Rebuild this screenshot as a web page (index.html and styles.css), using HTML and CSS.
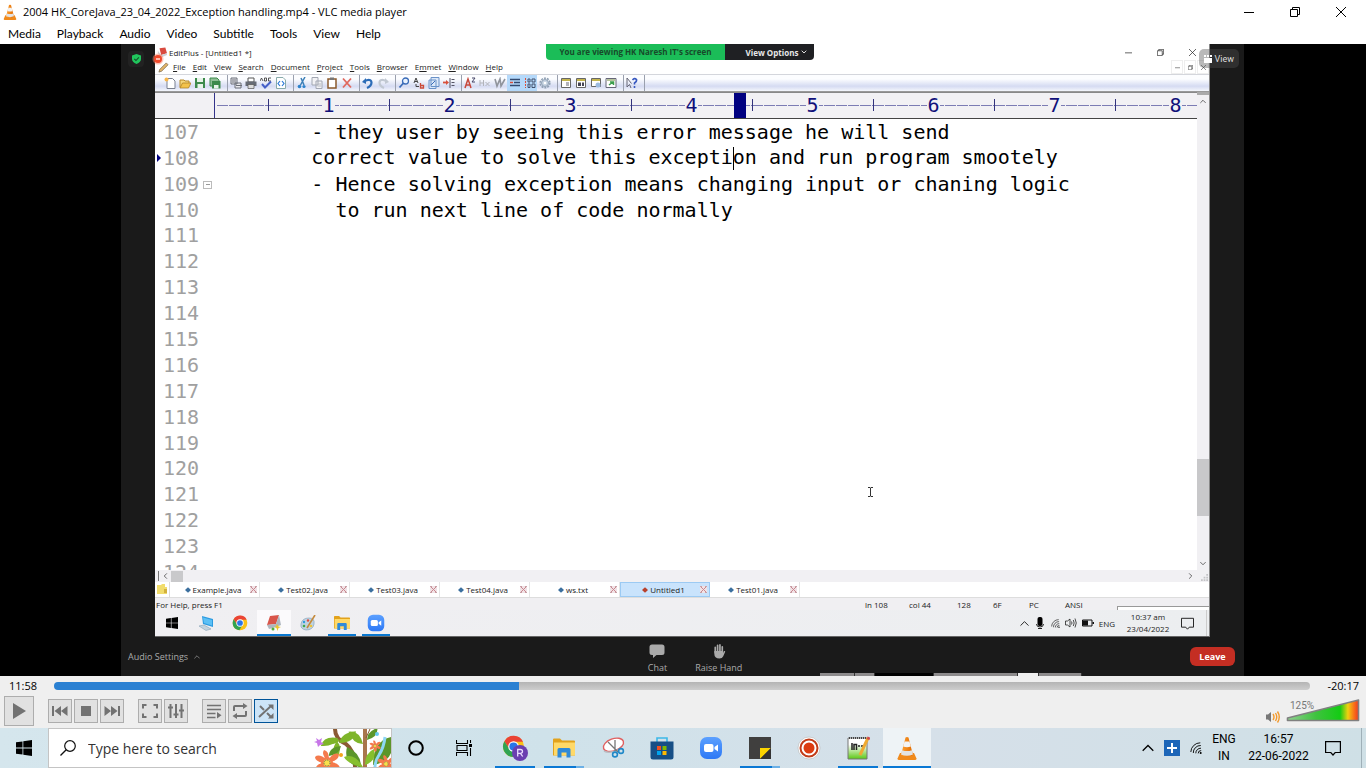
FILE: index.html
```html
<!DOCTYPE html>
<html lang="en">
<head>
<meta charset="utf-8">
<title>2004 HK_CoreJava_23_04_2022_Exception handling.mp4 - VLC media player</title>
<link rel="stylesheet" href="styles.css">
</head>
<body>
<svg class="defs" aria-hidden="true">
  <defs>
    <linearGradient id="gvol" x1="0" x2="1" y1="0" y2="0"><stop offset="0" stop-color="#8fd08f"/><stop offset=".4" stop-color="#3fc23f"/><stop offset=".74" stop-color="#14cc14"/><stop offset=".85" stop-color="#f0d010"/><stop offset=".93" stop-color="#f87818"/><stop offset="1" stop-color="#f03820"/></linearGradient>
    <linearGradient id="gzoom" x1="0" x2="0" y1="0" y2="1"><stop offset="0" stop-color="#5ba0ff"/><stop offset="1" stop-color="#2d78f5"/></linearGradient>
    <linearGradient id="gnote" x1="0" x2="0" y1="0" y2="1"><stop offset=".3" stop-color="#fff"/><stop offset="1" stop-color="#5cc814"/></linearGradient>
    <linearGradient id="gcone" x1="0" x2="1" y1="0" y2="0"><stop offset="0" stop-color="#ffa030"/><stop offset="1" stop-color="#e06a00"/></linearGradient>
  </defs>
  <symbol id="cone" viewBox="0 0 20 24"><path d="M3 17L0.5 22.5Q.5 24 2 24H18Q19.5 24 19.5 22.500L17 17Z" fill="#f08a1c"/><path d="M8.500 1.500Q10 .5 11.500 1.500L16 19Q10 22 4 19Z" fill="url(#gcone)"/><path d="M7.500 5.500H12.500L13.800 10.500Q10 12 6.200 10.500Z" fill="#f3f3f3"/><path d="M5.200 14.200Q10 16 14.800 14.200L16 18.500Q10 21 4 18.500Z" fill="#e3e3e3"/></symbol>
  <symbol id="win" viewBox="0 0 16 16"><path d="M0 2.300L6.500 1.400V7.600H0ZM7.300 1.300L16 0V7.600H7.300ZM0 8.400H6.500V14.600L0 13.700ZM7.300 8.400H16V16L7.300 14.700Z"/></symbol>
  <symbol id="chrome" viewBox="0 0 24 24"><circle cx="12" cy="12" r="11" fill="#fbc116"/><path d="M2.500 6.500A11 11 0 0 1 22 7H12L8 15Z" fill="#ea4335"/><path d="M2.500 6.500A11 11 0 0 0 11 23L16 14.500L8 15Z" fill="#30a352"/><circle cx="12" cy="12" r="5.500" fill="#fff"/><circle cx="12" cy="12" r="4.300" fill="#2a75e8"/></symbol>
  <symbol id="folder" viewBox="0 0 22 19"><path d="M0 1Q0 0 1 0H7L9 2H21Q22 2 22 3V17H0Z" fill="#e2a21c"/><path d="M1 4H22V17H1Z" fill="#ffd968"/><path d="M4.500 19V11Q4.500 9.500 6 9.500H16Q17.500 9.500 17.500 11V19H13.500V14H8.500V19Z" fill="#2f8ad8"/></symbol>
  <symbol id="zoomapp" viewBox="0 0 24 24"><rect x="1" y="1" width="22" height="22" rx="7" fill="url(#gzoom)"/><rect x="5" y="8" width="9.500" height="8" rx="2" fill="#fff"/><path d="M15.500 11L19 8.500V15.500L15.500 13Z" fill="#fff"/></symbol>
  <symbol id="wifi" viewBox="0 0 12 12"><path d="M.8 10A9.500 9.500 0 0 1 10.300.8M3.300 11A7.200 7.200 0 0 1 10.800 3.500M5.800 11.300A5 5 0 0 1 11 6.200M8.200 11.400A2.800 2.800 0 0 1 11.200 8.600" fill="none" stroke="currentColor" stroke-width=".9"/><circle cx="10.700" cy="11" r="1" fill="currentColor"/></symbol>
  <symbol id="note" viewBox="0 0 16 16"><path d="M.6 1.600H15.400V12.500H10.200L8 15L5.800 12.500H.6Z" fill="none" stroke="currentColor" stroke-width="1.200"/></symbol>
  <symbol id="up" viewBox="0 0 12 8"><path d="M.7 6.800L6 1.500L11.300 6.800" fill="none" stroke="currentColor" stroke-width="1.300"/></symbol>
  <symbol id="min" viewBox="0 0 10 10"><path d="M0 5.500H10" stroke="currentColor"/></symbol>
  <symbol id="max" viewBox="0 0 10 10"><path d="M.5 2.500H7.500V9.500H.5ZM2.500 2.500V.5H9.500V7.500H7.500" fill="none" stroke="currentColor"/></symbol>
  <symbol id="x" viewBox="0 0 10 10"><path d="M0 0L10 10M10 0L0 10" fill="none" stroke="currentColor"/></symbol>
  <symbol id="tabx" viewBox="0 0 7 7"><path d="M0 0H7V7H0Z" fill="#f0e2e5"/><path d="M.5.5L6.500 6.500M6.500.5L.5 6.500" stroke="#c98890"/><path d="M0 .5H2M5 .5H7M0 6.500H2M5 6.500H7" stroke="#c9a0a6"/></symbol>
  <symbol id="dia" viewBox="0 0 6 6"><path d="M0 3L3 .3L6 3L3 5.700Z" fill="currentColor"/></symbol>
</svg>

<header class="titlebar">
  <svg class="t-cone"><use href="#cone"/></svg>
  <h1>2004 HK_CoreJava_23_04_2022_Exception handling.mp4 - VLC media player</h1>
  <div class="wbtns">
    <button aria-label="Minimize"><svg><use href="#min"/></svg></button>
    <button aria-label="Restore"><svg><use href="#max"/></svg></button>
    <button aria-label="Close"><svg><use href="#x"/></svg></button>
  </div>
</header>
<nav class="menubar">
  <button>Media</button><button>Playback</button><button>Audio</button><button>Video</button><button>Subtitle</button><button>Tools</button><button>View</button><button>Help</button>
</nav>

<main class="video">
  <section class="meeting">
    <div class="stage">
      <div class="side">
        <button class="shield" aria-label="Meeting information"><svg viewBox="0 0 10 11"><path d="M5 0L10 1.600V5.500Q10 9 5 11Q0 9 0 5.500V1.600Z" fill="#20c55c"/><path d="M2.500 5.300L4.400 7.200L7.600 3.800" fill="none" stroke="#14502a" stroke-width="1.300"/></svg></button>
      </div>
      <div class="share">
        <div class="e-title">
          <svg class="e-logo" viewBox="0 0 12 12"><path d="M3 1L10 0L12 7L5 9Z" fill="#d94b3f"/><path d="M1 4L5 9L12 7V9L5 12L1 7Z" fill="#cfd3d8"/></svg>
          <span>EditPlus - [Untitled1 *]</span>
          <div class="e-wb">
            <button aria-label="Minimize"><svg><use href="#min"/></svg></button>
            <button aria-label="Restore"><svg><use href="#max"/></svg></button>
            <button aria-label="Close"><svg><use href="#x"/></svg></button>
          </div>
        </div>
        <div class="e-menu">
          <svg class="e-pencil" viewBox="0 0 12 12"><path d="M1 11L2 8L9 1L11 3L4 10Z" fill="#e2b568" stroke="#7a6a50" stroke-width=".8"/></svg>
          <button><u>F</u>ile</button><button><u>E</u>dit</button><button><u>V</u>iew</button><button><u>S</u>earch</button><button><u>D</u>ocument</button><button><u>P</u>roject</button><button><u>T</u>ools</button><button><u>B</u>rowser</button><button>E<u>m</u>met</button><button><u>W</u>indow</button><button><u>H</u>elp</button>
          <div class="mdi">
            <button aria-label="Minimize document"><svg><use href="#min"/></svg></button>
            <button aria-label="Restore document"><svg><use href="#max"/></svg></button>
            <button aria-label="Close document"><svg><use href="#x"/></svg></button>
          </div>
        </div>
        <div class="e-tools">
          <div class="grp">
            <button aria-label="New"><svg viewBox="0 0 12 12"><path d="M3 1.500H8.500L11 4V11.500H3Z" fill="#fff" stroke="#7a8190"/><circle cx="2.500" cy="2.500" r="2" fill="#f7b64c"/></svg></button>
            <button aria-label="Open"><svg viewBox="0 0 12 12"><path d="M1 10.500V3H5L6 4H10V6" fill="#f6d77c" stroke="#b98a2a"/><path d="M1 11L3.500 6H12L9.500 11Z" fill="#f3c24c" stroke="#a8791c" stroke-width=".7"/></svg></button>
            <button aria-label="Save"><svg viewBox="0 0 12 12"><path d="M1 1H11V11H1Z" fill="#3c8a4c"/><path d="M3 1H9V5H3ZM3.500 7H9V11H3.500Z" fill="#e7f3e9"/></svg></button>
            <button aria-label="Save all"><svg viewBox="0 0 12 12"><path d="M1 1H8L10 3V9H1Z" fill="#8fbf96" stroke="#3c8a4c"/><path d="M3 4H11.500V11.500H3Z" fill="#3c8a4c"/><path d="M5 8H9.500V11.500H5Z" fill="#e7f3e9"/></svg></button>
          </div>
          <div class="grp">
            <button aria-label="Print preview"><svg viewBox="0 0 12 12"><path d="M1 1H7V7H1ZM5 6H11V11H5Z" fill="#e8e8ec" stroke="#6b6f78"/><path d="M2 3H6M2 5H6M6 8.500H12" stroke="#6b6f78"/></svg></button>
            <button aria-label="Print"><svg viewBox="0 0 12 12"><path d="M3 1H9V5H3Z" fill="#fff" stroke="#555"/><path d="M.5 4.500H11.500V9H.5Z" fill="#666b75"/><path d="M3 7.500H9V11.500H3Z" fill="#ddd" stroke="#555" stroke-width=".7"/></svg></button>
            <button aria-label="Spell check"><svg viewBox="0 0 12 12"><path d="M0 4L1.500 1L3 4M4.500 1V4H6.500V1ZM11 1H8.500V4H11" fill="none" stroke="#444" stroke-width=".9"/><path d="M2 7L5 10.500L11 4.500" fill="none" stroke="#4560c8" stroke-width="2"/></svg></button>
            <button aria-label="View in browser"><svg viewBox="0 0 12 12"><path d="M1.500.5H8L10.500 3V11.500H1.500Z" fill="#fff" stroke="#8aa"/><path d="M5 4L3 6.500L5 9M7 4L9 6.500L7 9" fill="none" stroke="#2a78d8" stroke-width="1.200"/></svg></button>
          </div>
          <div class="grp">
            <button aria-label="Cut"><svg viewBox="0 0 12 12"><path d="M9 0L4.500 8M5 1L8 8" stroke="#3c7fb8" stroke-width="1.500"/><circle cx="3.500" cy="9.500" r="1.800" fill="#2c82cc"/><circle cx="8" cy="9.500" r="1.600" fill="#2c82cc"/></svg></button>
            <button aria-label="Copy"><svg viewBox="0 0 12 12"><path d="M1 .5H7V8H1ZM5 4H11V11.500H5Z" fill="#f2f2f5" stroke="#a2a7b2"/><path d="M6.500 7H10M6.500 9H10" stroke="#b5b9c2"/></svg></button>
            <button aria-label="Paste"><svg viewBox="0 0 12 12"><path d="M2 2H10V11H2Z" fill="#fff" stroke="#8a5a2c" stroke-width="1.500"/><path d="M4 .5H8V3H4Z" fill="#777"/></svg></button>
            <button aria-label="Delete"><svg viewBox="0 0 12 12"><path d="M2 1.500L10 10.500M10 1.500L2 10.500" stroke="#e0695f" stroke-width="1.800"/></svg></button>
          </div>
          <div class="grp">
            <button aria-label="Undo"><svg viewBox="0 0 12 12"><path d="M2 4.500Q9 1 9.500 5.500Q9.500 9 5 11" fill="none" stroke="#2c6cb8" stroke-width="2.200"/><path d="M0 5L4 1V7Z" fill="#2c6cb8"/></svg></button>
            <button aria-label="Redo"><svg viewBox="0 0 12 12"><path d="M10 4.500Q3 1 2.500 5.500Q2.500 9 7 11" fill="none" stroke="#c1c8d2" stroke-width="2.200"/><path d="M12 5L8 1V7Z" fill="#c1c8d2"/></svg></button>
          </div>
          <div class="grp">
            <button aria-label="Find"><svg viewBox="0 0 12 12"><circle cx="7.500" cy="4" r="3" fill="#eaf3ff" stroke="#3a6cb8" stroke-width="1.300"/><path d="M5.500 6L1.500 10.500" stroke="#3a6cb8" stroke-width="1.800"/></svg></button>
            <button aria-label="Replace"><svg viewBox="0 0 12 12"><path d="M1 6L3 1L5 6M2 4.500H4M3 7V9.500H6" fill="none" stroke="#444"/><path d="M7.500 6V11H10.500V8.500H7.500" fill="none" stroke="#cc4b38" stroke-width="1.300"/></svg></button>
            <button aria-label="Find in files"><svg viewBox="0 0 12 12"><path d="M3 .5H11V9.500H3ZM1 3H8V11.500H1Z" fill="#dce8f8" stroke="#6a92c8"/><path d="M3 8L7 4" stroke="#3a6cb8"/></svg></button>
            <button aria-label="Go to line"><svg viewBox="0 0 12 12"><path d="M0 5.500H4" stroke="#d8503c" stroke-width="1.800"/><path d="M3 3L6 5.500L3 8Z" fill="#d8503c"/><path d="M7 1V11M8.500 2.500H11.500M8.500 5.500H11.500M8.500 8.500H11.500" stroke="#556"/></svg></button>
          </div>
          <div class="grp">
            <button aria-label="Font"><svg viewBox="0 0 12 12"><path d="M1 11L4 2L7 11M2 8H6" fill="none" stroke="#c8483c" stroke-width="1.500"/><path d="M8 1H11L8 5H11" fill="none" stroke="#446"/></svg></button>
            <button aria-label="Hex viewer"><svg viewBox="0 0 12 12"><path d="M1 3V9M4.500 3V9M1 6H4.500M6.500 5L10.500 9M10.500 5L6.500 9" stroke="#b2b4ba"/></svg></button>
            <button aria-label="Word wrap"><svg viewBox="0 0 12 12"><path d="M1 2L3 9L6 2L7 9L11 2" fill="none" stroke="#90949c" stroke-width="1.600"/></svg></button>
            <button class="on" aria-label="Auto indent"><svg viewBox="0 0 12 12"><path d="M1 2.500H11M5 5.500H11M1 8.500H11" stroke="#334a70" stroke-width="1.300"/><path d="M1 5.500H4" stroke="#d8503c" stroke-width="1.500"/></svg></button>
            <button class="on" aria-label="Line numbers"><svg viewBox="0 0 12 12"><path d="M1.500 1V11" stroke="#d8503c" stroke-dasharray="2 1"/><path d="M4 2H6V5H4ZM8 2H11V5H8ZM4 7H6V10.500H4ZM8 7H11V10.500H8Z" fill="none" stroke="#42506c"/></svg></button>
            <button aria-label="Preferences"><svg viewBox="0 0 12 12"><circle cx="6" cy="6" r="4.800" fill="none" stroke="#8fa0b4" stroke-width="1.600" stroke-dasharray="2 1"/><circle cx="6" cy="6" r="3.500" fill="#c6d3e2" stroke="#8fa0b4"/><circle cx="6" cy="6" r="1.300" fill="#fff"/></svg></button>
          </div>
          <div class="grp">
            <button aria-label="Directory window"><svg viewBox="0 0 12 12"><path d="M1.500 1.500H10.500V10.500H1.500Z" fill="#fff" stroke="#666"/><path d="M2 3H10" stroke="#c4b44c" stroke-width="2"/><path d="M6 6H9M6 8H9" stroke="#667"/></svg></button>
            <button aria-label="Document selector"><svg viewBox="0 0 12 12"><path d="M1.500 1.500H10.500V10.500H1.500Z" fill="#fff" stroke="#666"/><path d="M2 3H10" stroke="#c4b44c" stroke-width="2"/><path d="M3 5.500H6V9H3ZM7 5.500H9V9H7Z" fill="#445"/></svg></button>
            <button aria-label="Output window"><svg viewBox="0 0 12 12"><path d="M1.500 1.500H10.500V9.500H1.500Z" fill="#fff" stroke="#666"/><path d="M2 3H10" stroke="#c4b44c" stroke-width="2"/><circle cx="8" cy="8" r="2.500" fill="#9dbbe0"/></svg></button>
            <button aria-label="Browser window"><svg viewBox="0 0 12 12"><path d="M1 1.500H11V10.500H1Z" fill="#fff" stroke="#667"/><path d="M2 3H10" stroke="#b6c49c" stroke-width="2"/><path d="M4 8L8 5M5 5H8.500V8" fill="none" stroke="#3c9e4c" stroke-width="1.500"/></svg></button>
          </div>
          <div class="grp">
            <button aria-label="Context help"><svg viewBox="0 0 12 12"><path d="M1 1V10L3.500 7.500L5 11M1 1L5.500 6.500" fill="none" stroke="#667"/><path d="M6.500 3Q8.500 .5 10.500 2.500Q11 4.500 8.500 6V7.500M8.500 9V11" fill="none" stroke="#3858c0" stroke-width="1.600"/></svg></button>
          </div>
        </div>
        <div class="work">
          <div class="page">
            <div class="ruler">
              <span class="r-pad"></span><span class="r-lead"></span>
              <span class="rc"><b>1</b></span><span class="rc"><b>2</b></span><span class="rc"><b>3</b></span><span class="rc caret-col"><b>4</b></span><span class="rc"><b>5</b></span><span class="rc"><b>6</b></span><span class="rc"><b>7</b></span><span class="rc"><b>8</b></span>
            </div>
            <div class="editor">
              <ol class="lines">
                <li><i>107</i><code>        - they user by seeing this error message he will send</code></li>
                <li class="cur"><i>108</i><code>        correct value to solve this excepti<span class="caret"></span>on and run program smootely</code></li>
                <li class="fold"><i>109</i><code>        - Hence solving exception means changing input or chaning logic</code></li>
                <li><i>110</i><code>          to run next line of code normally</code></li>
                <li><i>111</i></li><li><i>112</i></li><li><i>113</i></li><li><i>114</i></li><li><i>115</i></li><li><i>116</i></li><li><i>117</i></li><li><i>118</i></li><li><i>119</i></li><li><i>120</i></li><li><i>121</i></li><li><i>122</i></li><li><i>123</i></li><li><i>124</i></li>
              </ol>
              <svg class="ibeam" viewBox="0 0 7 10"><path d="M1 .5H3L3.500 1L4 .5H6M3.500 1V9M1 9.500H3L3.500 9L4 9.500H6" fill="none" stroke="#333"/></svg>
            </div>
          </div>
          <div class="vscroll">
            <button aria-label="Scroll up"><svg><use href="#up"/></svg></button>
            <span class="v-before"></span><span class="v-thumb"></span><span class="v-after"></span>
            <button class="flip" aria-label="Scroll down"><svg><use href="#up"/></svg></button>
          </div>
        </div>
        <div class="hscroll">
          <span class="h-edge"></span>
          <button class="lt" aria-label="Scroll left"><svg><use href="#up"/></svg></button><span class="h-thumb"></span>
          <button class="rt" aria-label="Scroll right"><svg><use href="#up"/></svg></button>
          <svg class="grip" viewBox="0 0 8 8"><path d="M6 0H8V2H6ZM3 3H5V5H3ZM6 3H8V5H6ZM0 6H2V8H0ZM3 6H5V8H3ZM6 6H8V8H6Z" fill="#c3c3c6"/></svg>
        </div>
        <div class="tabs">
          <span class="t-folder"><svg viewBox="0 0 10 10"><path d="M0 1H4L5 0H8V3H10V10H0Z" fill="#f1dc6c"/><path d="M7 5H10V9H7Z" fill="#d2b13c"/></svg></span>
          <button><span><svg class="d"><use href="#dia"/></svg>Example.java</span><svg class="c"><use href="#tabx"/></svg></button>
          <button><span><svg class="d"><use href="#dia"/></svg>Test02.java</span><svg class="c"><use href="#tabx"/></svg></button>
          <button><span><svg class="d"><use href="#dia"/></svg>Test03.java</span><svg class="c"><use href="#tabx"/></svg></button>
          <button><span><svg class="d"><use href="#dia"/></svg>Test04.java</span><svg class="c"><use href="#tabx"/></svg></button>
          <button><span><svg class="d"><use href="#dia"/></svg>ws.txt</span><svg class="c"><use href="#tabx"/></svg></button>
          <button class="active"><span><svg class="d"><use href="#dia"/></svg>Untitled1</span><svg class="c"><use href="#tabx"/></svg></button>
          <button><span><svg class="d"><use href="#dia"/></svg>Test01.java</span><svg class="c"><use href="#tabx"/></svg></button>
        </div>
        <div class="status">
          <span class="help">For Help, press F1</span>
          <span class="s1">ln 108</span><span class="s2">col 44</span><span class="s3">128</span><span class="s3">6F</span><span class="s3">PC</span><span class="s4">ANSI</span><span class="peek"></span>
        </div>
        <div class="itask">
          <button class="ib" aria-label="Start"><svg class="i12"><use href="#win"/></svg></button>
          <button class="ib" aria-label="This PC"><svg viewBox="0 0 16 16"><path d="M4 1L15 4V12L5 9Z" fill="#2c9be0"/><path d="M5 2.500L14 5V10.500L6 8Z" fill="#5cc0f5"/><path d="M1 11L6 10L13 14L8 15.500Z" fill="#c3d3de" stroke="#8aa3b5" stroke-width=".6"/></svg></button>
          <button class="ib" aria-label="Chrome"><svg><use href="#chrome"/></svg></button>
          <button class="ib sel" aria-label="EditPlus"><svg viewBox="0 0 16 16"><path d="M4 1L13 0L10 9L1 10Z" fill="#d8554a"/><path d="M13 0L15 10L10 12V9ZM1 10L10 9V12L3 14Z" fill="#aeb6bf"/><path d="M11 9L12.500 11.500L15 12L12.500 13L11.500 16L10.500 13L8 12L10 11.500Z" fill="#e9c52c"/><circle cx="7" cy="14" r="1.500" fill="#4fae3c"/></svg></button>
          <button class="ib" aria-label="Paint"><svg viewBox="0 0 16 16"><path d="M1 9Q2 3 9 3Q15 3 14 9Q13 15 6 15Q0 14 1 9Z" fill="#bfd3e2" stroke="#88a5bc" stroke-width=".7"/><path d="M15 0L7 13" stroke="#c48a3c" stroke-width="1.600"/><circle cx="4" cy="7" r="1.200" fill="#2e9ae0"/><circle cx="8" cy="5.500" r="1.200" fill="#e04c3c"/><circle cx="4" cy="11" r="1.300" fill="#40a84c"/><circle cx="11" cy="11" r="1.300" fill="#eec338"/></svg></button>
          <button class="ib run" aria-label="File Explorer"><svg><use href="#folder"/></svg></button>
          <button class="ib run" aria-label="Zoom"><svg class="i18"><use href="#zoomapp"/></svg></button>
          <div class="itray">
            <svg class="w9"><use href="#up"/></svg>
            <svg viewBox="0 0 9 12"><rect x="2" y="0" width="5" height="9" rx="2"/><path d="M1 7Q1 10 4.500 10Q8 10 8 7M2.500 11.500H6.500" fill="none" stroke="#222"/></svg>
            <svg class="w9w"><use href="#wifi"/></svg>
            <svg viewBox="0 0 12 12"><path d="M.5 4H2.500L5 2V10L2.500 8H.5ZM6.500 4.500Q7.500 6 6.500 7.500M8.300 3Q10 6 8.300 9M10 1.500Q12.500 6 10 10.500" fill="none" stroke="#222" stroke-width=".8"/></svg>
            <svg viewBox="0 0 12 12"><path d="M.5 3H10V9H.5Z" fill="none" stroke="#111"/><path d="M1 3.500H6V8.500H1ZM10.500 5H12V7H10.500Z" fill="#111"/></svg>
            <span>ENG</span>
            <time class="i-clock">10:37 am<br>23/04/2022</time>
            <svg class="w13"><use href="#note"/></svg>
          </div>
        </div>
        <svg class="recdot" viewBox="0 0 12 12"><circle cx="6" cy="6" r="5.500" fill="#ff8a70" opacity=".5"/><circle cx="6" cy="6" r="4" fill="#ef4a2c"/><path d="M4 5H8V7H4Z" fill="#ffb9a8"/></svg>
        <div class="banner"><span>You are viewing HK Naresh IT's screen</span><button>View Options <svg viewBox="0 0 6 4"><path d="M.7.7L3 3L5.300.7" fill="none" stroke="#ddd"/></svg></button></div>
      </div>
      <div class="side"></div>
      <button class="viewbtn"><svg viewBox="0 0 8 8"><path d="M0 0H2V2H0ZM3 0H5V2H3ZM6 0H8V2H6ZM0 3H8V8H0Z" fill="#fff"/></svg>View</button>
    </div>
    <footer class="zbar">
      <button class="audio">Audio Settings <svg><use href="#up"/></svg></button>
      <div class="mid">
        <button><svg viewBox="0 0 16 14"><path d="M3 0H13Q15.500 0 15.500 2.500V8Q15.500 10.500 13 10.500H7.500L4 13.500V10.500H3Q.5 10.500.5 8V2.500Q.5 0 3 0Z" fill="#aaa"/></svg>Chat</button>
        <button><svg viewBox="0 0 14 16"><path d="M3 9V3.500M5.500 8V1.500M8 8V1M10.500 9V3" stroke="#aaa" stroke-width="1.800" stroke-linecap="round"/><path d="M2 7.500H11.500V9.500L12.500 7.500Q14 7 13.500 8.500L11.500 13Q10.500 15.500 7.500 15.500Q2 15.500 2 10.500Z" fill="#aaa"/></svg>Raise Hand</button>
      </div>
      <button class="leave">Leave</button>
      <div class="strip"><i></i><i></i><i></i><i></i><i></i><i></i></div>
    </footer>
  </section>
</main>

<section class="player">
  <div class="seek">
    <time>11:58</time>
    <input type="range" min="0" max="100" value="37" aria-label="Position">
    <time>-20:17</time>
  </div>
  <div class="ctl">
    <button class="play" aria-label="Play"><svg viewBox="0 0 16 16"><path d="M2 0L15 8L2 16Z"/></svg></button>
    <div class="cg">
      <button aria-label="Previous"><svg viewBox="0 0 16 16"><path d="M0 3H2V13H0ZM9 3V13L2.500 8ZM15.500 3V13L9 8Z"/></svg></button>
      <button aria-label="Stop"><svg viewBox="0 0 16 16"><path d="M3 3H13V13H3Z"/></svg></button>
      <button aria-label="Next"><svg viewBox="0 0 16 16"><path d="M14 3H16V13H14ZM.5 3V13L7 8ZM7 3V13L13.500 8Z"/></svg></button>
    </div>
    <div class="cg">
      <button aria-label="Fullscreen"><svg viewBox="0 0 16 16"><path d="M1 5.500V2H4.500M11.500 2H15V5.500M15 10.500V14H11.500M4.500 14H1V10.500" fill="none" stroke="#727272" stroke-width="2"/></svg></button>
      <button aria-label="Extended settings"><svg viewBox="0 0 16 16"><path d="M2.500 1V15M8 1V15M13.500 1V15M0 4.500H5M5.500 11.500H10.500M11 7.500H16" stroke="#727272" stroke-width="2"/></svg></button>
    </div>
    <div class="cg">
      <button aria-label="Playlist"><svg viewBox="0 0 16 16"><path d="M1 2.500H15M1 6.500H15M1 10.500H9.500M1 14.500H9.500" stroke="#727272" stroke-width="1.700"/><path d="M11 9L15.500 12.200L11 15.500Z"/></svg></button>
      <button aria-label="Loop"><svg viewBox="0 0 16 16"><path d="M2 8V4Q2 3 3 3H12M14 8V12Q14 13 13 13H4" fill="none" stroke="#727272" stroke-width="2"/><path d="M11 0L15.500 3L11 6ZM5 10L.5 13L5 16Z"/></svg></button>
      <button class="act" aria-label="Random"><svg viewBox="0 0 16 16"><path d="M1 14L13 3M2 3L6 7M9 10L13 14" fill="none" stroke="#727272" stroke-width="2"/><path d="M10 1.500H15.500V7ZM10 15.500H15.500V10Z"/></svg></button>
    </div>
    <div class="vol">
      <svg class="spk" viewBox="0 0 14 14"><path d="M0 4.500H2L5 2V12L2 9.500H0Z" fill="#777"/><path d="M7 4Q9 7 7 10M9.500 3Q12 7 9.500 11M11.500 1.500Q15 7 11.500 12.500" fill="none" stroke="#f39a2c" stroke-width="1.400"/></svg>
      <div class="ramp">
        <span>125%</span>
        <svg viewBox="0 0 74 24"><path d="M1.500 22.500V20L72.500 2V22.500Z" fill="url(#gvol)" stroke="#808080" stroke-width="1.600" stroke-linejoin="round"/></svg>
        <input type="range" min="0" max="125" value="125" aria-label="Volume">
      </div>
    </div>
  </div>
</section>

<footer class="taskbar">
  <button class="start" aria-label="Start"><svg><use href="#win"/></svg></button>
  <div class="search">
    <svg class="mag" viewBox="0 0 16 16"><circle cx="10" cy="6" r="5.300" fill="none" stroke="#111" stroke-width="1.200"/><path d="M6.200 9.800L.5 15.500" stroke="#111" stroke-width="1.300"/></svg>
    <input type="text" placeholder="Type here to search" aria-label="Search">
    <svg class="flowers" viewBox="0 0 78 38">
      <defs><path id="leaf" d="M0 0Q2-8 13-9Q12 0 0 0Z"/><g id="fl"><path d="M0-3Q-6-9-3-13Q2-12 2-4Q7-11 12-9Q12-3 4-1Q12 0 13 5Q8 9 3 3Q6 10 1 13Q-4 11-2 4Q-8 10-12 7Q-11 1-4 0Q-12-2-12-6Q-8-10 0-3Z"/><circle r="6"/><circle r="3.500" fill="#f9e04a"/><circle r="3" fill="none" stroke="#555" stroke-dasharray="1 1"/></g></defs>
      <path d="M22 0Q22 10 33 15Q42 22 42 38" fill="none" stroke="#8a5a34" stroke-width="4"/>
      <path d="M52 0V38" stroke="#a9764c" stroke-width="4"/><path d="M57 0L53 9" stroke="#8a5a34"/>
      <g fill="#7eb52a"><use href="#leaf" transform="translate(27 11) rotate(-155)"/><use href="#leaf" transform="translate(26 14) scale(1.300)"/><use href="#leaf" transform="translate(25 9) rotate(190) scale(1.200)"/><use href="#leaf" transform="translate(24 12) rotate(125) scale(1.100)"/><use href="#leaf" transform="translate(50 15) rotate(-105) scale(1.200)"/></g>
      <g fill="#5b962a"><use href="#leaf" transform="translate(28 17) rotate(175)"/><use href="#leaf" transform="translate(54 11) rotate(-15)"/><path d="M46 38Q30 34 34 18Q48 24 48 38Z"/><path d="M60 36Q60 12 78 8V24Q74 34 60 36Z"/></g>
      <path d="M48 38Q34 34 31 28Q42 24 50 38ZM52 36Q52 24 61 20Q64 32 52 36Z" fill="#86bf2e"/>
      <path d="M72 8Q71 18 66 26Q62 32 62 38" fill="none" stroke="#8dd7f5" stroke-width="3"/>
      <g fill="#f47a4c"><use href="#fl" transform="translate(14 34)"/><use href="#fl" transform="translate(62 17) scale(.45)"/><use href="#fl" transform="translate(73 35) scale(.7)"/></g>
      <path d="M3 9L6 11L9 9L8 13L11 15L7 16L5 18L4 14L1 13L4 12Z" fill="#c777e8"/><circle cx="64" cy="5" r="2" fill="#66c9ec"/><circle cx="28" cy="26" r="2" fill="#f3a51c"/>
    </svg>
  </div>
  <button class="tb" aria-label="Cortana"><svg class="i16" viewBox="0 0 16 16"><circle cx="8" cy="8" r="6.800" fill="none" stroke="#000" stroke-width="2"/></svg></button>
  <button class="tb" aria-label="Task view"><svg class="i16" viewBox="0 0 16 16"><path d="M.5 0V3.500H11.500V0M.5 16V12.500H11.500V16M1 5.500H11V10.500H1ZM14.500 0V3M14.500 8V16" fill="none" stroke="#000" stroke-width="1.100"/><path d="M13 4H16V7H13Z"/></svg></button>
  <div class="apps">
    <button class="tb run" aria-label="Chrome"><svg class="i25" viewBox="0 0 26 26"><use href="#chrome" width="23" height="23"/><circle cx="18" cy="18" r="8" fill="#6a3fb0"/><path d="M15.700 21.500V14.500H18.500Q20.500 14.500 20.500 16.500Q20.500 18.300 18.500 18.300H15.700M18.500 18.300L20.700 21.500" fill="none" stroke="#eadcff" stroke-width="1.300"/></svg></button>
    <button class="tb run many" aria-label="File Explorer"><svg class="i22"><use href="#folder"/></svg></button>
    <button class="tb" aria-label="Snipping Tool"><svg class="i24" viewBox="0 0 24 24"><ellipse cx="12.500" cy="9" rx="10.500" ry="6" transform="rotate(-20 12 9)" fill="#fff" stroke="#e06060" stroke-width="1.400"/><path d="M3 15Q8 18 17 14" fill="none" stroke="#b9bcc2" stroke-width="1.500"/><path d="M7 6L17 16M14 4V15" stroke="#777" stroke-width="1.300"/><circle cx="14" cy="18.500" r="2.400" fill="none" stroke="#2088c8" stroke-width="1.600"/><circle cx="20" cy="15" r="2.400" fill="none" stroke="#2088c8" stroke-width="1.600"/></svg></button>
    <button class="tb" aria-label="Microsoft Store"><svg class="i24" viewBox="0 0 24 24"><path d="M7 6V2H17V6" fill="none" stroke="#3cb8e8" stroke-width="1.600"/><path d="M.5 5.500H23.500V21Q23.500 23.500 21 23.500H3Q.5 23.500.5 21Z" fill="#174f86"/><path d="M7 10H11V14H7Z" fill="#f25022"/><path d="M12.500 10H16.500V14H12.500Z" fill="#7fba00"/><path d="M7 15H11V19H7Z" fill="#00a4ef"/><path d="M12.500 15H16.500V19H12.500Z" fill="#ffb900"/></svg></button>
    <button class="tb" aria-label="Zoom"><svg class="i24"><use href="#zoomapp"/></svg></button>
    <button class="tb run many" aria-label="Sticky Notes"><svg class="i22" viewBox="0 0 22 22"><path d="M0 0H22V22H0Z" fill="#403f3e"/><path d="M11 22V11H22Z" fill="#fbd400"/><path d="M11 22L22 11V22Z" fill="#333"/></svg></button>
    <button class="tb" aria-label="Screen recorder"><svg class="i24" viewBox="0 0 24 24"><circle cx="12" cy="12" r="11" fill="#fff" stroke="#bbb" stroke-width=".7"/><circle cx="12" cy="12" r="8.500" fill="none" stroke="#c23c18" stroke-width="2"/><circle cx="12" cy="12" r="5.500" fill="#dc3c10"/></svg></button>
    <button class="tb run" aria-label="Text editor"><svg class="i24" viewBox="0 0 24 24"><path d="M2 2H21V23H2Z" fill="url(#gnote)" stroke="#777"/><path d="M3 2H20" stroke="#444" stroke-width="2" stroke-dasharray="1 1"/><path d="M6 7V14M8 14V8.500H10.500V14M12 10H14M15 10H17" fill="none" stroke="#222" stroke-width="1.500"/><path d="M22 2L14 19" stroke="#efaa32" stroke-width="3"/><path d="M23 1L22 3.500" stroke="#d0484a" stroke-width="3"/></svg></button>
    <button class="tb run cur-app" aria-label="VLC media player"><svg class="i24"><use href="#cone"/></svg></button>
  </div>
  <div class="tray">
    <button aria-label="Show hidden icons"><svg class="w12"><use href="#up"/></svg></button>
    <button aria-label="Add"><svg class="i16" viewBox="0 0 16 16"><path d="M0 0H16V16H0Z" fill="#1d66b8"/><path d="M8 3V13M3 8H13" stroke="#fff" stroke-width="2"/></svg></button>
    <button aria-label="Network"><svg class="i12"><use href="#wifi"/></svg></button>
    <span class="lang">ENG<br>IN</span>
    <time class="clock">16:57<br>22-06-2022</time>
    <button class="bell" aria-label="Notifications"><svg class="i16"><use href="#note"/></svg></button>
  </div>
</footer>
</body>
</html>
```
FILE: styles.css
```css
* { box-sizing: border-box; }
body { margin: 0; height: 100vh; display: flex; flex-direction: column; background: #fff; color: #000; font-family: Roboto, "Open Sans", sans-serif; font-size: 12px; }
button { margin: 0; padding: 0; border: 0; background: none; font: inherit; color: inherit; white-space: nowrap; }
input { font: inherit; }
svg { display: block; flex: none; }
.defs { position: absolute; width: 0; height: 0; }

/* window frame */
.titlebar { display: flex; align-items: center; flex: none; height: 23px; padding: 0 2px 0 3px; gap: 6px; }
.t-cone { width: 14px; height: 16px; }
.titlebar h1 { margin: 0; font-family: "Open Sans", sans-serif; font-size: 11px; font-weight: 400; line-height: 22px; white-space: nowrap; }
.wbtns { display: flex; margin-left: auto; }
.wbtns button { width: 46px; height: 20px; display: grid; place-items: center; }
.wbtns svg { width: 10px; height: 10px; }
.menubar { display: flex; gap: 16px; flex: none; height: 21px; padding: 0 8px; align-items: center; font-family: Lato, sans-serif; }
.menubar button { line-height: 20px; }

/* video surface */
.video { flex: 1; min-height: 0; display: flex; background: #000; padding: 0 122px 0 121px; }
.meeting { flex: 1; display: flex; flex-direction: column; background: #1a1a1a; min-width: 0; }
.stage { flex: 1; display: flex; position: relative; min-height: 0; }
.side { width: 34px; flex: none; padding: 7px 7px; }
.shield { width: 16px; height: 16px; border-radius: 4px; background: #222; display: grid; place-items: center; }
.shield svg { width: 9px; height: 10px; }
.share { flex: 1; min-width: 0; display: flex; flex-direction: column; position: relative; background: #fff; color: #222; font-family: "Open Sans", sans-serif; font-size: 8px; border-right: 1px solid #888; border-bottom: 1px solid #666; }
.viewbtn { position: absolute; right: 5px; top: 5px; height: 19px; padding: 0 5px; border-radius: 5px; background: rgba(80, 80, 80, .4); color: #ddd; font-size: 9px; display: flex; align-items: center; gap: 3px; }
.viewbtn svg { width: 8px; height: 8px; }

.e-title { display: flex; align-items: center; height: 16px; padding-left: 2px; gap: 2px; }
.e-logo { width: 10px; height: 11px; }
.e-wb { display: flex; margin-left: auto; padding-right: 1px; }
.e-wb button { width: 32px; height: 15px; display: grid; place-items: center; }
.e-wb svg { width: 7px; height: 7px; }
.e-menu { display: flex; align-items: center; height: 14px; padding-left: 3px; gap: 7px; line-height: 12px; }
.e-pencil { width: 11px; height: 11px; margin-right: -3px; }
.mdi { display: flex; gap: 1px; margin-left: auto; align-self: stretch; }
.mdi button { width: 12px; border: 1px solid #eee; display: grid; place-items: center; }
.mdi svg { width: 5px; height: 5px; }
.e-tools { display: flex; height: 18px; padding-left: 7px; border-top: 1px solid #d4d6dc; border-bottom: 1px solid #999; background: linear-gradient(#fcfdff 25%, #d5dbf2 70%, #f4f6fc); }
.grp { display: flex; padding-right: 5px; border-right: 1px solid #9aa0ae; }
.grp button { width: 15px; display: grid; place-items: center; }
.grp svg { width: 12px; height: 12px; }
.grp .on { background: #b5d9fa; }

.work { flex: 1; display: flex; min-height: 0; }
.page { flex: 1; min-width: 0; display: flex; flex-direction: column; }
.ruler { display: flex; flex: none; height: 27px; overflow: hidden; background: #f2f1f4; border-bottom: 1px solid #444; border-top: 1px solid #888; font-family: "DejaVu Sans Mono", monospace; font-size: 20px; color: #10107a; }
.r-pad { flex: none; width: 60px; border-right: 1px solid #33338a; }
.r-lead { flex: none; width: 53px; background: repeating-linear-gradient(90deg, #7c7cb4 0 11px, transparent 11px 12px) 2px 50% / 100% 1px no-repeat; }
.rc { flex: none; width: 121px; display: grid; place-items: center; position: relative; background: repeating-linear-gradient(90deg, #7c7cb4 0 11px, transparent 11px 12px) 0 50% / 100% 1px no-repeat; }
.rc::before { content: ""; position: absolute; left: 0; top: 6px; bottom: 7px; width: 1px; background: #33337c; }
.rc b { font-weight: 400; line-height: 25px; background: #f2f1f4; }
.caret-col::after { content: ""; position: absolute; right: 6px; top: 0; bottom: 0; width: 12px; background: #000080; }
.editor { flex: 1; min-height: 0; position: relative; overflow: hidden; }
.lines { list-style: none; margin: 0; padding: 0; height: calc(100% + 15px); display: grid; grid-auto-rows: 1fr; font-family: "DejaVu Sans Mono", monospace; font-size: 20px; line-height: 24px; color: #000; }
.lines li { display: flex; align-items: center; position: relative; padding-left: 8px; min-height: 0; }
.lines i { font-style: normal; color: #a0a0a0; width: 52px; }
.lines code { font: inherit; white-space: pre; }
.cur::before { content: ""; position: absolute; left: 2px; top: 9px; border: 4px solid transparent; border-left-color: #000080; border-right: 0; }
.fold::before { content: ""; position: absolute; left: 48px; top: 10px; width: 7px; height: 6px; border: 1px solid #bbb; background: linear-gradient(#999, #999) 50% 50% / 4px 1px no-repeat; }
.caret { display: inline-block; width: 1px; height: 23px; margin-right: -1px; vertical-align: middle; background: #000; }
.ibeam { position: absolute; left: 712px; top: 368px; width: 7px; height: 10px; }
.vscroll { width: 12px; display: flex; flex-direction: column; background: #f1f0f3; border-top: 3px solid #aaa; }
.vscroll button { height: 12px; display: grid; place-items: center; }
.vscroll svg, .hscroll button svg { width: 6px; height: 5px; }
.flip { transform: rotate(180deg); }
.v-before { flex: 352; }
.v-thumb { flex: 57; background: #c8c8ca; }
.v-after { flex: 42; }
.hscroll { display: flex; align-items: center; height: 12px; background: #f1f0f3; }
.h-edge { width: 4px; height: 10px; border-right: 1px solid #777; }
.hscroll button { width: 12px; height: 12px; display: grid; place-items: center; }
.lt { transform: rotate(-90deg); }
.rt { transform: rotate(90deg); margin-left: auto; }
.h-thumb { width: 12px; height: 11px; background: #c9c9cb; }
.grip { width: 7px; height: 7px; margin: 3px 1px 0 4px; }
.tabs { display: flex; height: 16px; border-bottom: 1px solid #ddd; }
.t-folder { width: 15px; padding: 2px; border-right: 1px solid #ddd; }
.t-folder svg { width: 10px; height: 10px; }
.tabs button { flex: 0 1 90px; display: flex; align-items: center; padding: 0 2px 0 6px; border-right: 1px solid #e6e6e6; line-height: 13px; }
.tabs button span { flex: 1; display: flex; align-items: center; justify-content: center; gap: 2px; }
.tabs .active { background: #c9e3fc; border: 1px solid #9ccaf3; }
.d { width: 6px; height: 6px; color: #3b6f9e; }
.active .d { color: #b8402c; }
.c { width: 7px; height: 7px; }
.status { display: flex; height: 12px; line-height: 13px; padding-left: 1px; background: #f0eff2; }
.help { flex: 1; }
.s1 { width: 44px; }
.s2 { width: 48px; }
.s3 { width: 36px; }
.s4 { width: 52px; }
.s1, .s2, .s3, .s4 { white-space: nowrap; }
.peek { width: 92px; margin-top: 8px; background: #fff; border-top: 1px solid #999; border-left: 1px solid #999; }
.itask { display: flex; height: 26px; background: linear-gradient(90deg, #f0eff2, #eceef0); padding-right: 2px; }
.ib { width: 34px; display: grid; place-items: center; position: relative; }
.ib svg { width: 16px; height: 16px; }
.ib .i12 { width: 12px; height: 12px; }
.ib .i18 { width: 18px; height: 18px; }
.ib.sel { background: linear-gradient(#0a78d0, #0a78d0) 50% 100% / 100% 2px no-repeat #fbfafc; }
.ib.run { background: linear-gradient(#0a78d0, #0a78d0) 50% 100% / 28px 2px no-repeat; }
.itray { margin-left: auto; display: flex; align-items: center; gap: 5px; padding-right: 12px; border-right: 1px solid #ccc; }
.itray svg { width: 12px; height: 12px; color: #222; }
.itray .w9 { width: 9px; height: 7px; }
.itray .w9w { width: 9px; height: 9px; }
.itray .w13 { width: 13px; height: 13px; }
.i-clock { width: 56px; text-align: center; line-height: 12px; }
.recdot { position: absolute; left: -3px; top: 9px; width: 12px; height: 12px; }
.banner { position: absolute; left: 391px; top: 0; height: 16px; display: flex; border-radius: 0 0 4px 4px; overflow: hidden; font-weight: 700; line-height: 15px; white-space: nowrap; }
.banner span { width: 179px; text-align: center; background: #1bbd58; color: #174a2a; }
.banner button { width: 89px; background: #1f2023; color: #e8e8e8; display: flex; align-items: center; justify-content: center; gap: 3px; padding-left: 14px; }
.banner svg { width: 6px; height: 4px; }

.zbar { height: 39px; flex: none; display: flex; align-items: center; justify-content: space-between; position: relative; padding: 0 9px 0 7px; color: #aaa; font-family: "Open Sans", sans-serif; font-size: 9px; }
.audio { display: flex; align-items: center; gap: 6px; }
.audio svg { width: 6px; height: 4px; }
.mid { display: flex; gap: 28px; }
.mid button { display: flex; flex-direction: column; align-items: center; gap: 3px; line-height: 12px; padding-top: 4px; }
.mid svg { width: 16px; height: 15px; }
.leave { width: 45px; height: 19px; border-radius: 6px; background: #c42e23; color: #fff; font-weight: 700; }
.strip { position: absolute; left: 699px; bottom: 0; width: 262px; height: 3px; display: grid; grid-template-columns: 35px 20px 59px 84px 21px 1fr; }
.strip i { background: #8d8b8c; border-right: 1px solid #333; }
.strip i:nth-child(3) { background: #000; }
.strip i:nth-child(5) { background: #eee; }

/* player controls */
.player { background: #efefef; flex: none; height: 52px; }
.seek { display: flex; align-items: center; height: 19px; padding: 0 7px 0 9px; font-family: "Open Sans", sans-serif; font-size: 11px; gap: 17px; }
.seek time { line-height: 18px; }
.seek input { flex: 1; min-width: 0; margin: 0; height: 8px; appearance: none; border-radius: 4px; background: linear-gradient(90deg, #2a80d2 37%, transparent 37%), linear-gradient(#b4b4b4, #cdcdcd); }
.seek input::-webkit-slider-thumb { appearance: none; width: 1px; height: 8px; }
.ctl { display: flex; align-items: center; gap: 14px; padding-left: 4px; height: 31px; }
.ctl button { width: 24px; height: 24px; border: 1px solid #adadad; background: #e1e1e1; display: grid; place-items: center; }
.ctl button.play { width: 30px; height: 30px; }
.ctl svg { width: 16px; height: 16px; fill: #727272; }
.cg { display: flex; gap: 2px; }
.ctl button.act { background: #cce4f7; border-color: #005499; }
.vol { margin-left: auto; display: flex; align-items: flex-end; gap: 6px; padding-right: 6px; }
.vol .spk { width: 14px; height: 14px; }
.ramp { position: relative; width: 74px; height: 24px; margin-bottom: 2px; }
.ramp svg { width: 74px; height: 24px; }
.ramp span { position: absolute; left: 4px; top: 0; font-size: 10px; line-height: 16px; color: #777; }
.ramp input { position: absolute; inset: 0; width: 100%; margin: 0; opacity: 0; }

/* taskbar */
.taskbar { display: flex; flex: none; height: 40px; background: linear-gradient(90deg, #d5e6ed, #cfe2ea 40%, #d6e0e9 68%, #cfe0e6); }
.start { width: 48px; display: grid; place-items: center; }
.start svg { width: 16px; height: 16px; }
.search { width: 344px; display: flex; align-items: center; background: #fff; border: 1px solid #c4c4c4; padding-left: 11px; gap: 12px; }
.mag { width: 16px; height: 16px; }
.search input { flex: 1; min-width: 0; border: 0; padding: 0; outline: 0; background: none; font-family: "Open Sans", sans-serif; font-size: 14px; color: #333; }
.search input::placeholder { color: #333; opacity: 1; }
.flowers { width: 78px; height: 38px; }
.tb { width: 48px; height: 40px; display: grid; place-items: center; }
.apps { display: flex; gap: 1px; padding-left: 3px; }
.run { background: linear-gradient(#0a78d4, #0a78d4) 50% 100% / 40px 2px no-repeat; }
.run.many { background: linear-gradient(90deg, #0a78d4 80%, #6bb0e6 80%) 50% 100% / 40px 2px no-repeat; }
.tb.cur-app { background: linear-gradient(#0a78d4, #0a78d4) 0 100% / 100% 2px no-repeat #eef3f6; }
.i12 { width: 12px; height: 12px; }
.i16 { width: 16px; height: 16px; }
.i22 { width: 22px; height: 22px; }
.i24 { width: 24px; height: 24px; }
.i25 { width: 26px; height: 26px; }
.w12 { width: 12px; height: 8px; }
.tray { margin-left: auto; margin-right: 4px; border-right: 1px solid #9fb0b8; display: flex; align-items: center; line-height: 17px; }
.tray button { width: 24px; height: 40px; display: grid; place-items: center; }
.lang { width: 32px; text-align: center; }
.clock { width: 77px; text-align: center; }
.tray .bell { width: 44px; padding-right: 12px; }
```
